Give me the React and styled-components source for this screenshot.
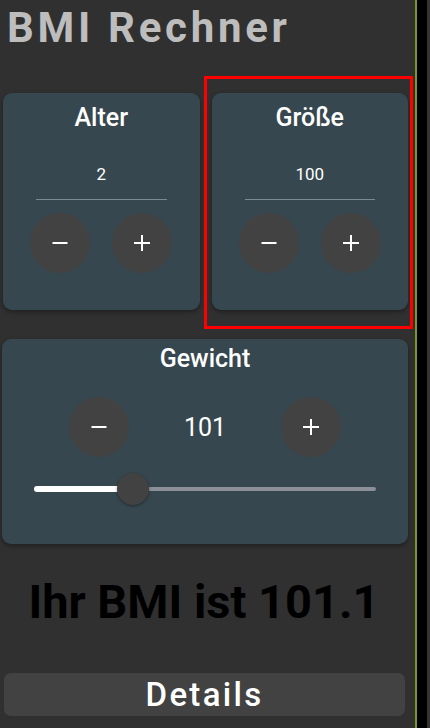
import React, { useState } from 'react';
import styled, { createGlobalStyle } from 'styled-components';

const GlobalStyle = createGlobalStyle`
  html, body {
    margin: 0;
    padding: 0;
    background: #303030;
  }
  * {
    box-sizing: border-box;
  }
`;

const Screen = styled.div`
  display: flex;
  width: 430px;
  height: 728px;
  overflow: hidden;
  font-family: Roboto, "Liberation Sans", sans-serif;
`;

const Main = styled.div`
  width: 415px;
  display: flex;
  flex-direction: column;
  background: #303030;
`;

const EdgeStrip = styled.div`
  width: 12px;
  background: #000;
  border-left: 2px solid #7a9a1c;
`;

const EdgeGap = styled.div`
  width: 3px;
  background: #353535;
`;

const Title = styled.h1`
  margin: 3px 0 0 7px;
  font-size: 42px;
  font-weight: 700;
  line-height: normal;
  letter-spacing: 3.7px;
  color: #bdbdbd;
`;

const CardRow = styled.div`
  display: flex;
  gap: 12px;
  padding: 0 7px 0 3px;
  margin-top: 41px;
`;

const Card = styled.div`
  position: relative;
  flex: ${p => (p.$grow ? 1 : 'none')};
  background: #37474f;
  border-radius: 9px;
  box-shadow: 0 2px 4px rgba(0, 0, 0, 0.35);
  display: flex;
  flex-direction: column;
  align-items: center;
  padding: ${p => p.$pad || '11px 0 37px'};
  margin: ${p => p.$margin || '0'};

  ${p => p.$highlight && `
    &::after {
      content: '';
      position: absolute;
      top: -17px;
      left: -8px;
      right: -5px;
      bottom: -19px;
      border: 3px solid #ff0000;
      pointer-events: none;
    }
  `}
`;

const CardTitle = styled.div`
  font-size: 25px;
  font-weight: 500;
  line-height: 28px;
  color: #ffffff;
`;

const SmallValue = styled.div`
  margin-top: 32px;
  font-size: 17px;
  line-height: 20px;
  color: #ffffff;
`;

const Divider = styled.div`
  align-self: stretch;
  margin: 15px 33px 0;
  height: 1px;
  background: #7b8a90;
`;

const ButtonPair = styled.div`
  display: flex;
  gap: 22px;
  margin-top: 13px;
`;

const RoundButton = styled.button`
  width: 60px;
  height: 60px;
  border-radius: 50%;
  border: none;
  padding: 0;
  background: #424242;
  color: #fff;
  display: flex;
  align-items: center;
  justify-content: center;
  cursor: pointer;
`;

const WeightRow = styled.div`
  display: grid;
  grid-template-columns: 60px 152px 60px;
  align-items: center;
  margin-top: 24px;
`;

const BigValue = styled.div`
  text-align: center;
  font-size: 25px;
  color: #ffffff;
`;

const SliderBox = styled.div`
  align-self: stretch;
  position: relative;
  height: 32px;
  margin: 16px 32px 0;
  display: flex;
  align-items: center;
`;

const TrackInactive = styled.div`
  position: absolute;
  left: 0;
  right: 0;
  height: 4px;
  border-radius: 2px;
  background: #8c8e98;
`;

const TrackActive = styled.div`
  position: absolute;
  left: 0;
  height: 6px;
  border-radius: 3px;
  background: #ffffff;
`;

const Thumb = styled.div`
  position: absolute;
  width: 32px;
  height: 32px;
  margin-left: -16px;
  border-radius: 50%;
  background: #424242;
  box-shadow: 0 1px 3px rgba(0, 0, 0, 0.4);
`;

const Result = styled.div`
  margin-top: 30px;
  padding-right: 7px;
  text-align: center;
  font-size: 47px;
  font-weight: 700;
  line-height: 56px;
  color: #000000;
`;

const DetailsButton = styled.button`
  margin: 43px 10px 0 4px;
  height: 43px;
  border: none;
  border-radius: 7px;
  background: #424242;
  color: #ffffff;
  font-family: Roboto, "Liberation Sans", sans-serif;
  font-size: 33px;
  font-weight: 500;
  letter-spacing: 2.3px;
  line-height: 43px;
  padding: 0;
`;

const Minus = () => (
  <svg width="16" height="16" viewBox="0 0 16 16">
    <line x1="0.5" y1="8" x2="15.5" y2="8" stroke="#fff" strokeWidth="2" />
  </svg>
);

const Plus = () => (
  <svg width="16" height="16" viewBox="0 0 16 16">
    <line x1="0" y1="8" x2="16" y2="8" stroke="#fff" strokeWidth="2" />
    <line x1="8" y1="0" x2="8" y2="16" stroke="#fff" strokeWidth="2" />
  </svg>
);

const Stepper = ({ label, value, onChange, highlight }) => (
  <Card $grow $highlight={highlight}>
    <CardTitle>{label}</CardTitle>
    <SmallValue>{value}</SmallValue>
    <Divider />
    <ButtonPair>
      <RoundButton onClick={() => onChange(value - 1)}><Minus /></RoundButton>
      <RoundButton onClick={() => onChange(value + 1)}><Plus /></RoundButton>
    </ButtonPair>
  </Card>
);

export default function App() {
  const [age, setAge] = useState(2);
  const [height, setHeight] = useState(100);
  const [weight, setWeight] = useState(101);
  const [bmi] = useState('101.1');

  const min = 20;
  const max = 300;
  const pct = ((weight - min) / (max - min)) * 100;

  return (
    <>
      <GlobalStyle />
      <Screen>
        <Main>
          <Title>BMI Rechner</Title>
          <CardRow>
            <Stepper label="Alter" value={age} onChange={setAge} />
            <Stepper label="Größe" value={height} onChange={setHeight} highlight />
          </CardRow>
          <Card $pad="6px 0 39px" $margin="29px 7px 0 2px">
            <CardTitle>Gewicht</CardTitle>
            <WeightRow>
              <RoundButton onClick={() => setWeight(weight - 1)}><Minus /></RoundButton>
              <BigValue>{weight}</BigValue>
              <RoundButton onClick={() => setWeight(weight + 1)}><Plus /></RoundButton>
            </WeightRow>
            <SliderBox>
              <TrackInactive />
              <TrackActive style={{ width: `${pct}%` }} />
              <Thumb style={{ left: `${pct}%` }} />
            </SliderBox>
          </Card>
          <Result>Ihr BMI ist {bmi}</Result>
          <DetailsButton>Details</DetailsButton>
        </Main>
        <EdgeStrip />
        <EdgeGap />
      </Screen>
    </>
  );
}
